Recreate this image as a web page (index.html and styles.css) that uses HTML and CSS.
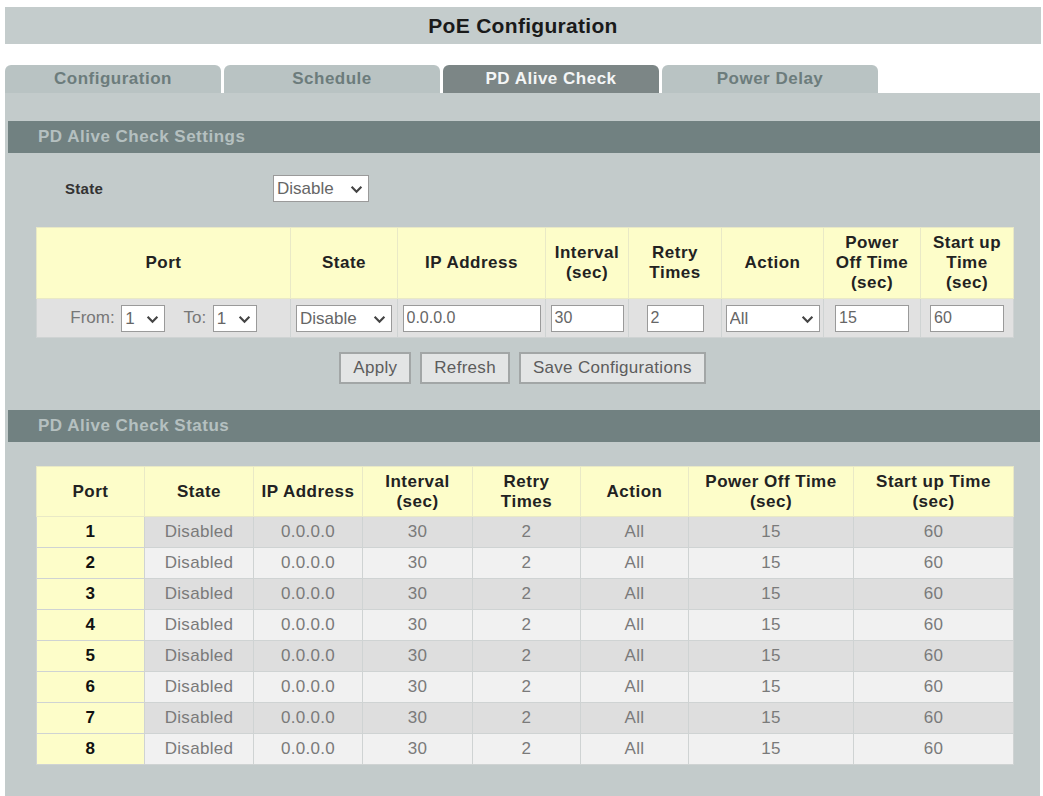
FILE: index.html
```html
<!DOCTYPE html>
<html lang="en">
<head>
  <meta charset="UTF-8">
  <title>PoE Configuration</title>
  <link rel="stylesheet" href="styles.css">
</head>
<body>

<div class="title">PoE Configuration</div>

<div class="tabs">
  <div class="tab">Configuration</div>
  <div class="tab">Schedule</div>
  <div class="tab active">PD Alive Check</div>
  <div class="tab">Power Delay</div>
</div>

<div class="panel">
  <div class="section">PD Alive Check Settings</div>

  <div class="state-row">
    <span class="state-label">State</span>
    <span class="sel sel-state">
      <select><option>Disable</option><option>Enable</option></select>
      <svg viewBox="0 0 12 8"><path d="M1.5 1.5 6 6l4.5-4.5" /></svg>
    </span>
  </div>

  <table class="grid settings">
    <colgroup>
      <col style="width:254px"><col style="width:107px"><col style="width:148px"><col style="width:83px">
      <col style="width:93px"><col style="width:102px"><col style="width:97px"><col style="width:93px">
    </colgroup>
    <tr>
      <th>Port</th>
      <th>State</th>
      <th>IP Address</th>
      <th>Interval<br>(sec)</th>
      <th>Retry<br>Times</th>
      <th>Action</th>
      <th>Power<br>Off Time<br>(sec)</th>
      <th>Start up<br>Time<br>(sec)</th>
    </tr>
    <tr>
      <td>
        <span class="lbl">From:</span>
        <span class="sel sel-port">
          <select><option>1</option></select>
          <svg viewBox="0 0 12 8"><path d="M1.5 1.5 6 6l4.5-4.5" /></svg>
        </span>
        <span class="lbl lbl-to">To:</span>
        <span class="sel sel-port">
          <select><option>1</option></select>
          <svg viewBox="0 0 12 8"><path d="M1.5 1.5 6 6l4.5-4.5" /></svg>
        </span>
      </td>
      <td>
        <span class="sel sel-state">
          <select><option>Disable</option></select>
          <svg viewBox="0 0 12 8"><path d="M1.5 1.5 6 6l4.5-4.5" /></svg>
        </span>
      </td>
      <td><input class="in in-ip" value="0.0.0.0"></td>
      <td><input class="in in-interval" value="30"></td>
      <td><input class="in in-retry" value="2"></td>
      <td>
        <span class="sel sel-action">
          <select><option>All</option></select>
          <svg viewBox="0 0 12 8"><path d="M1.5 1.5 6 6l4.5-4.5" /></svg>
        </span>
      </td>
      <td><input class="in in-time" value="15"></td>
      <td><input class="in in-time" value="60"></td>
    </tr>
  </table>

  <div class="buttons">
    <button>Apply</button>
    <button>Refresh</button>
    <button>Save Configurations</button>
  </div>

  <div class="section">PD Alive Check Status</div>

  <table class="grid status">
    <colgroup>
      <col style="width:108px"><col style="width:109px"><col style="width:109px"><col style="width:110px">
      <col style="width:108px"><col style="width:108px"><col style="width:165px"><col style="width:160px">
    </colgroup>
    <tr>
      <th>Port</th>
      <th>State</th>
      <th>IP Address</th>
      <th>Interval<br>(sec)</th>
      <th>Retry<br>Times</th>
      <th>Action</th>
      <th>Power Off Time<br>(sec)</th>
      <th>Start up Time<br>(sec)</th>
    </tr>
    <tr><td class="port">1</td><td>Disabled</td><td>0.0.0.0</td><td>30</td><td>2</td><td>All</td><td>15</td><td>60</td></tr>
    <tr><td class="port">2</td><td>Disabled</td><td>0.0.0.0</td><td>30</td><td>2</td><td>All</td><td>15</td><td>60</td></tr>
    <tr><td class="port">3</td><td>Disabled</td><td>0.0.0.0</td><td>30</td><td>2</td><td>All</td><td>15</td><td>60</td></tr>
    <tr><td class="port">4</td><td>Disabled</td><td>0.0.0.0</td><td>30</td><td>2</td><td>All</td><td>15</td><td>60</td></tr>
    <tr><td class="port">5</td><td>Disabled</td><td>0.0.0.0</td><td>30</td><td>2</td><td>All</td><td>15</td><td>60</td></tr>
    <tr><td class="port">6</td><td>Disabled</td><td>0.0.0.0</td><td>30</td><td>2</td><td>All</td><td>15</td><td>60</td></tr>
    <tr><td class="port">7</td><td>Disabled</td><td>0.0.0.0</td><td>30</td><td>2</td><td>All</td><td>15</td><td>60</td></tr>
    <tr><td class="port">8</td><td>Disabled</td><td>0.0.0.0</td><td>30</td><td>2</td><td>All</td><td>15</td><td>60</td></tr>
  </table>
</div>

</body>
</html>
```

FILE: styles.css
```css
body {
  margin: 0;
  background: #fff;
  font-family: "Liberation Sans", Arial, sans-serif;
  color: #222;
}

.title {
  margin: 7px 2px 0 5px;
  height: 37px;
  line-height: 37px;
  background: #c4cccc;
  text-align: center;
  font-size: 21px;
  letter-spacing: 0.3px;
  font-weight: bold;
  color: #1a1a1a;
}

.tabs {
  display: flex;
  gap: 3px;
  margin: 21px 0 0 5px;
}

.tab {
  width: 216px;
  height: 28px;
  line-height: 28px;
  border-radius: 6px 6px 0 0;
  background: #b9c3c3;
  text-align: center;
  font-size: 17px;
  letter-spacing: 0.5px;
  font-weight: bold;
  color: #6c7c7c;
}

.tab.active {
  background: #7c8686;
  color: #f4f6f6;
}

.panel {
  margin: 0 3px 0 5px;
  padding: 28px 0 32px;
  background: #c3cbcb;
}

.section {
  margin-left: 3px;
  height: 32px;
  line-height: 31px;
  padding-left: 30px;
  background: #718181;
  font-size: 17px;
  letter-spacing: 0.5px;
  font-weight: bold;
  color: #b5c0c0;
}

.state-row {
  display: flex;
  align-items: center;
  margin: 22px 0 25px 60px;
}

.state-label {
  width: 208px;
  font-size: 15px;
  letter-spacing: 0.3px;
  font-weight: bold;
  color: #333;
}

/* selects with a drawn chevron */
.sel {
  position: relative;
  display: inline-block;
  vertical-align: middle;
}

.sel select {
  appearance: none;
  -webkit-appearance: none;
  height: 27px;
  border: 1px solid #9a9a9a;
  border-radius: 0;
  background: #fff;
  font-family: "Liberation Sans", Arial, sans-serif;
  font-size: 17px;
  color: #666;
  padding: 0 0 0 3px;
  width: 100%;
}

.sel svg {
  position: absolute;
  right: 6px;
  top: 10px;
  width: 13px;
  height: 9px;
  fill: none;
  stroke: #444;
  stroke-width: 2;
}

.sel-state { width: 96px; }
.sel-port { width: 44px; }
.sel-action { width: 94px; }

.grid {
  margin-left: 31px;
  width: 977px;
  table-layout: fixed;
  border-collapse: collapse;
}

.grid th {
  background: #fdfdc9;
  border: 1px solid #e9e9c6;
  font-size: 17px;
  letter-spacing: 0.5px;
  font-weight: bold;
  color: #222;
  line-height: 20px;
  padding: 0;
}

.grid td {
  border: 1px solid #cfd3d3;
  padding: 0;
  text-align: center;
}

.settings th { height: 70px; }
.settings td {
  height: 38px;
  background: #e1e1e1;
}

.lbl {
  font-size: 17px;
  color: #777;
  vertical-align: middle;
  margin-right: 2px;
}

.lbl-to { margin-left: 14px; }

.in {
  height: 27px;
  box-sizing: border-box;
  border: 1px solid #9a9a9a;
  background: #fff;
  font-family: "Liberation Sans", Arial, sans-serif;
  font-size: 16px;
  color: #666;
  padding: 0 3px;
  vertical-align: middle;
}

.in-ip { width: 138px; }
.in-interval { width: 73px; }
.in-retry { width: 57px; }
.in-time { width: 74px; }

.buttons {
  display: flex;
  justify-content: center;
  gap: 9px;
  margin: 14px 0 26px;
}

.buttons button {
  height: 32px;
  padding: 0 12px;
  border: 2px solid #a2a6a6;
  background: #e3e5e5;
  font-family: "Liberation Sans", Arial, sans-serif;
  font-size: 17px;
  letter-spacing: 0.3px;
  color: #5c5c5c;
}

.status {
  margin-top: 24px;
}

.status th { height: 49px; }

.status td {
  height: 30px;
  font-size: 17px;
  letter-spacing: 0.3px;
  color: #7a7a7a;
  background: #dedede;
}

.status tr:nth-child(odd) td { background: #f1f1f1; }

.status td.port {
  background: #fdfdc9;
  font-weight: bold;
  color: #111;
}

.status tr:nth-child(odd) td.port { background: #fdfdc9; }
```
